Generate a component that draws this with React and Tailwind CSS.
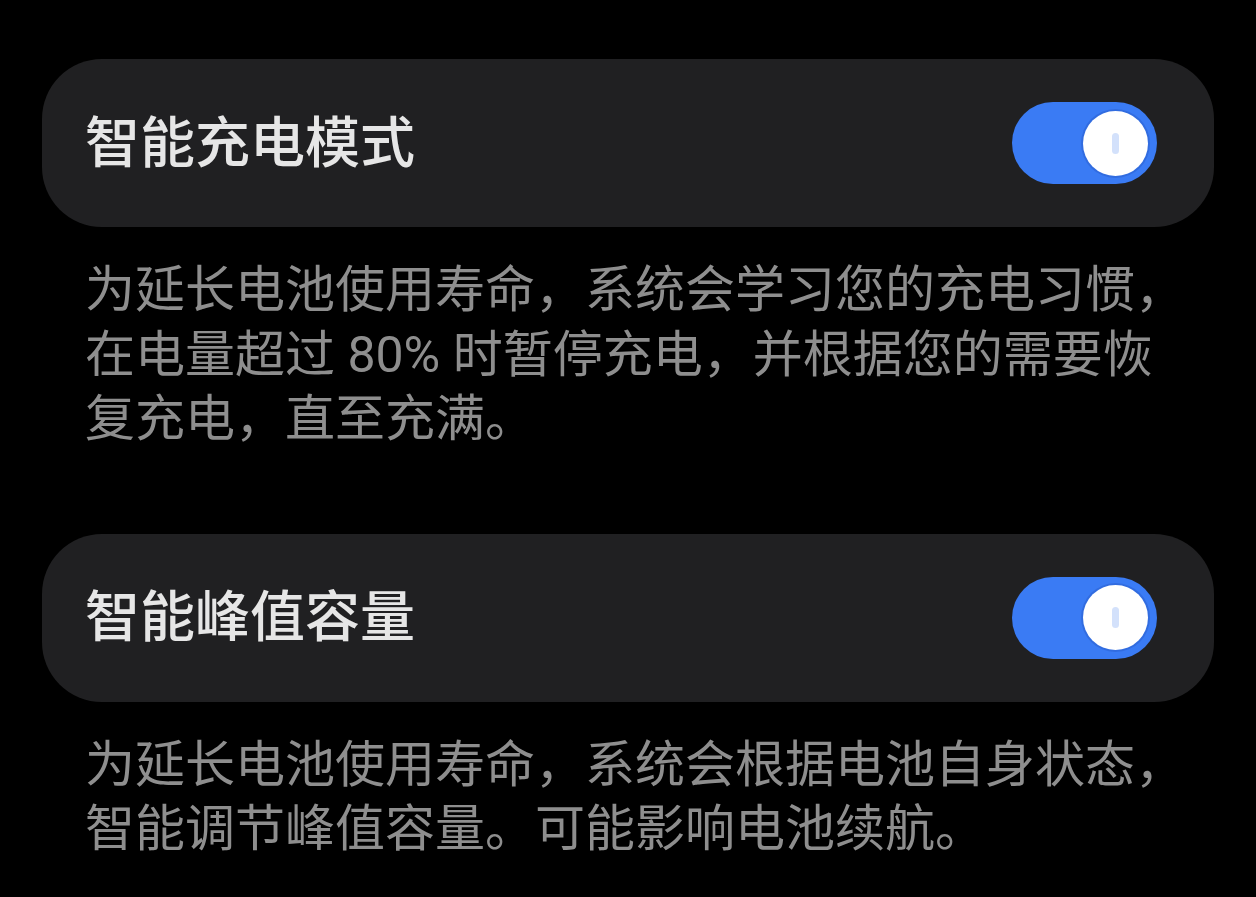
import { useState } from 'react';

const settings = [
  {
    id: 'smart-charge',
    title: '智能充电模式',
    lines: [
      '为延长电池使用寿命，系统会学习您的充电习惯，',
      '在电量超过 80% 时暂停充电，并根据您的需要恢',
      '复充电，直至充满。',
    ],
  },
  {
    id: 'peak-capacity',
    title: '智能峰值容量',
    lines: [
      '为延长电池使用寿命，系统会根据电池自身状态，',
      '智能调节峰值容量。可能影响电池续航。',
    ],
  },
];

function Toggle({ on, onChange }) {
  return (
    <button
      type="button"
      onClick={() => onChange(!on)}
      className={`flex h-[82px] w-[145px] shrink-0 items-center rounded-full px-[9px] ${
        on ? 'justify-end bg-[#3a7bf4]' : 'justify-start bg-[#4a4a4e]'
      }`}
    >
      <span className="flex h-[65px] w-[65px] items-center justify-center rounded-full bg-white shadow-[0_0_0_2px_rgba(40,90,200,0.45)]">
        <span className={`h-[21px] w-[7px] rounded-full ${on ? 'bg-[#d3e1fb]' : 'bg-[#d9d9d9]'}`} />
      </span>
    </button>
  );
}

export default function App() {
  const [enabled, setEnabled] = useState({ 'smart-charge': true, 'peak-capacity': true });

  return (
    <div
      className="min-h-screen bg-black px-[42px] pt-[59px]"
      style={{ fontFamily: 'Roboto, "Noto Sans CJK SC", sans-serif' }}
    >
      {settings.map((item, i) => (
        <section key={item.id} className={i > 0 ? 'mt-[82px]' : ''}>
          <div className="flex h-[168px] items-center justify-between rounded-[60px] bg-[#202022] pl-[43px] pr-[57px]">
            <span className="text-[55px] font-medium leading-none text-[#e6e6e6]">{item.title}</span>
            <Toggle
              on={enabled[item.id]}
              onChange={(v) => setEnabled({ ...enabled, [item.id]: v })}
            />
          </div>
          <p className="mt-[31px] px-[43px] text-[50px] leading-[64.5px] text-[#8e8e8e]">
            {item.lines.map((line) => (
              <span key={line} className="block whitespace-nowrap">
                {line}
              </span>
            ))}
          </p>
        </section>
      ))}
    </div>
  );
}
